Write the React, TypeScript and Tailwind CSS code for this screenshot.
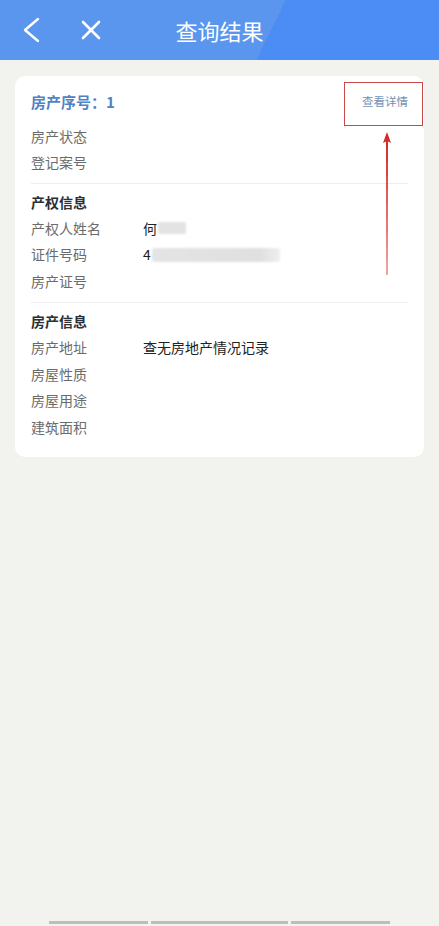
import { FC, ReactNode } from 'react';

const font = { fontFamily: '"Noto Sans CJK SC", "Noto Sans", sans-serif' };

// Plain label / value row
const Row: FC<{ label: string; children?: ReactNode }> = ({ label, children }) => (
  <div className="flex h-[26.5px] items-center text-[14px]">
    <span className="w-[112px] shrink-0 text-[#6b6b6b]">{label}</span>
    <span className="flex items-center text-[#222]">{children}</span>
  </div>
);

const SectionTitle: FC<{ title: string }> = ({ title }) => (
  <div className="flex h-[26px] items-center text-[14px] font-bold text-[#2b2f36]">{title}</div>
);

const App: FC = () => {
  return (
    <div className="flex min-h-screen flex-col bg-[#f2f2ee]" style={font}>
      {/* Header */}
      <div className="relative flex h-[60px] items-center bg-[linear-gradient(116deg,#5a95ee_0%,#5a95ee_61%,#4b8df5_61%,#4b8df5_100%)]">
        <div className="flex items-center pl-[20px]">
          <svg width="22" height="26" viewBox="0 0 22 26" fill="none">
            <path d="M18 2 L5 13 L18 24" stroke="white" strokeWidth="2.4" strokeLinecap="round" strokeLinejoin="round" />
          </svg>
          <svg className="ml-[38px]" width="22" height="22" viewBox="0 0 22 22" fill="none">
            <path d="M3 3 L19 19 M19 3 L3 19" stroke="white" strokeWidth="2.6" strokeLinecap="round" />
          </svg>
        </div>
        <div className="absolute left-0 right-0 top-0 flex h-full items-center justify-center pointer-events-none">
          <span className="text-[22px] text-white">查询结果</span>
        </div>
      </div>

      {/* Result card */}
      <div className="relative mx-[15px] mt-[16px] rounded-[10px] bg-white px-[16px] pb-[16px] pt-[5px]">
        <div className="flex h-[42px] items-center justify-between">
          <span className="text-[15px] font-bold text-[#4f82c6]">房产序号：1</span>
          <span className="text-[11.5px] text-[#6f91b8]">查看详情</span>
        </div>
        <Row label="房产状态" />
        <Row label="登记案号" />
        <div className="mt-[7px] h-px bg-[#eeeeee]" />

        <div className="mt-[5px]">
          <SectionTitle title="产权信息" />
          <Row label="产权人姓名">
            何<span className="ml-px inline-block h-[12px] w-[28px] rounded-[2px] bg-[#e3e3e3] blur-[1px]" />
          </Row>
          <Row label="证件号码">
            4<span className="ml-[1px] inline-block h-[14px] w-[128px] rounded-[3px] bg-[linear-gradient(90deg,#e4e4e4_0%,#e0e0e0_85%,#efefef_100%)] blur-[1px]" />
          </Row>
          <Row label="房产证号" />
        </div>
        <div className="mt-[7px] h-px bg-[#eeeeee]" />

        <div className="mt-[6px]">
          <SectionTitle title="房产信息" />
          <Row label="房产地址">查无房地产情况记录</Row>
          <Row label="房屋性质" />
          <Row label="房屋用途" />
          <Row label="建筑面积" />
        </div>

        {/* Annotation: red box and arrow */}
        <div className="absolute left-[329px] top-[6px] h-[44px] w-[79px] border-[1.5px] border-[#c84a48]" />
        <svg className="absolute left-[366px] top-[56px]" width="12" height="146" viewBox="0 0 12 146" fill="none">
          <path d="M6 0 L10 11 L6 9 L2 11 Z" fill="#d62a26" />
          <path d="M5 8 L7 8 L6.4 143 L5.6 143 Z" fill="#d62a26" />
        </svg>
      </div>

      {/* Bottom bar */}
      <div className="mt-auto flex h-[5px] items-start pl-[49px]">
        <div className="h-[3px] w-[99px] bg-[#bdbdbb]" />
        <div className="ml-[3px] h-[3px] w-[137px] bg-[#bdbdbb]" />
        <div className="ml-[3px] h-[3px] w-[99px] bg-[#bdbdbb]" />
      </div>
    </div>
  );
};

export default App;
